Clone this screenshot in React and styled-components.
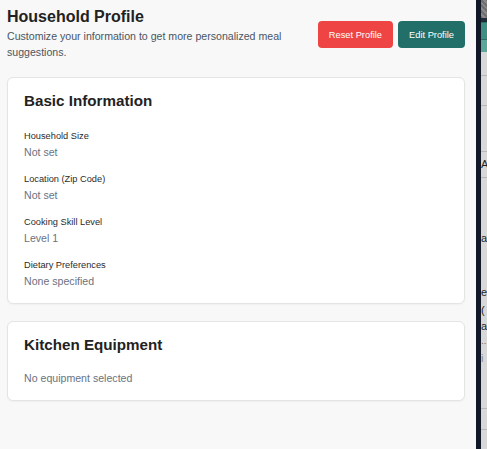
import React from "react";
import styled, { createGlobalStyle } from "styled-components";

const GlobalStyle = createGlobalStyle`
  html, body {
    margin: 0;
    padding: 0;
    background: #f8f8f8;
    font-family: "Liberation Sans", Arial, Helvetica, sans-serif;
  }
  *, *::before, *::after {
    box-sizing: border-box;
  }
`;

const fields = [
  { label: "Household Size", value: "Not set" },
  { label: "Location (Zip Code)", value: "Not set" },
  { label: "Cooking Skill Level", value: "Level 1" },
  { label: "Dietary Preferences", value: "None specified" },
];

// rows of the neighbouring panel that peeks in at the right edge
const peekRows = [
  { h: 24, line: true },
  { h: 30, line: true },
  { h: 46, line: true },
  { h: 26, text: "A", line: true },
  { h: 50 },
  { h: 20, text: "a" },
  { h: 34 },
  { h: 20, text: "e" },
  { h: 16, text: "(" },
  { h: 16, text: "a" },
  { h: 16, text: "…", small: true },
  { h: 16, text: "i", faint: true },
  { h: 43, line: true },
  { h: 21, line: true },
];

export default function App() {
  return (
    <>
      <GlobalStyle />
      <Page>
        <Main>
          <Header>
            <TitleBlock>
              <Title>Household Profile</Title>
              <Subtitle>
                Customize your information to get more personalized meal
                suggestions.
              </Subtitle>
            </TitleBlock>
            <Actions>
              <Button $variant="danger">Reset Profile</Button>
              <Button>Edit Profile</Button>
            </Actions>
          </Header>

          <Card>
            <CardTitle>Basic Information</CardTitle>
            <Fields>
              {fields.map((f) => (
                <Field key={f.label}>
                  <Label>{f.label}</Label>
                  <Value>{f.value}</Value>
                </Field>
              ))}
            </Fields>
          </Card>

          <Card>
            <CardTitle>Kitchen Equipment</CardTitle>
            <Value>No equipment selected</Value>
          </Card>
        </Main>

        <Peek>
          <Thumb />
          <DarkBand />
          <TealBand />
          <TealBand $light />
          {peekRows.map((r, i) => (
            <PeekRow key={i} $h={r.h} $line={r.line}>
              {r.text && (
                <PeekText $small={r.small} $faint={r.faint}>
                  {r.text}
                </PeekText>
              )}
            </PeekRow>
          ))}
        </Peek>
      </Page>
    </>
  );
}

const Page = styled.div`
  display: flex;
  min-height: 100vh;
  width: 100%;
  overflow: hidden;
`;

const Main = styled.main`
  flex: 1;
  min-width: 0;
  display: flex;
  flex-direction: column;
  gap: 17px;
  padding: 7px 11px 0 7px;
`;

const Header = styled.div`
  display: flex;
  align-items: center;
  justify-content: space-between;
`;

const TitleBlock = styled.div`
  flex: 1;
  max-width: 286px;
`;

const Title = styled.h1`
  margin: 0;
  font-size: 16px;
  line-height: 20px;
  font-weight: 700;
  color: #222222;
`;

const Subtitle = styled.p`
  margin: 1px 0 0;
  font-size: 10.6px;
  line-height: 16px;
  color: #4b5563;
`;

const Actions = styled.div`
  display: flex;
  gap: 5px;
  margin-top: 2px;
`;

const Button = styled.button`
  height: 27px;
  padding: 0 11px;
  border: none;
  border-radius: 4px;
  font-family: inherit;
  font-size: 9.3px;
  color: #ffffff;
  background: ${(p) => (p.$variant === "danger" ? "#ef4444" : "#226f69")};
  cursor: pointer;
`;

const Card = styled.section`
  background: #ffffff;
  border: 1px solid #e4e4e4;
  border-radius: 6px;
  box-shadow: 0 1px 2px rgba(0, 0, 0, 0.04);
  padding: 14px 16px;
`;

const CardTitle = styled.h2`
  margin: 0 0 16px;
  font-size: 15.2px;
  line-height: 18px;
  font-weight: 700;
  color: #222222;
`;

const Fields = styled.div`
  display: flex;
  flex-direction: column;
  gap: 12px;
  padding-top: 3px;
`;

const Field = styled.div`
  display: flex;
  flex-direction: column;
  gap: 1px;
`;

const Label = styled.div`
  font-size: 9.25px;
  line-height: 14px;
  color: #2b2b2b;
`;

const Value = styled.div`
  font-size: 10.6px;
  line-height: 16px;
  color: #6b7280;
`;

const Peek = styled.aside`
  width: 11px;
  flex-shrink: 0;
  border-left: 5px solid #111827;
  background: #d8d8d8;
  overflow: hidden;
  display: flex;
  flex-direction: column;
`;

const Thumb = styled.div`
  height: 18px;
  flex-shrink: 0;
  background: repeating-linear-gradient(
    45deg,
    #6f6f6f 0 2px,
    #8a8a8a 2px 4px
  );
`;

const DarkBand = styled.div`
  height: 4px;
  flex-shrink: 0;
  background: #1d2b36;
`;

const TealBand = styled.div`
  height: ${(p) => (p.$light ? "13px" : "17px")};
  flex-shrink: 0;
  background: ${(p) => (p.$light ? "#5ba89a" : "#3e8f82")};
  border-top: 1px solid #2e6f66;
`;

const PeekRow = styled.div`
  height: ${(p) => p.$h}px;
  flex-shrink: 0;
  border-bottom: ${(p) => (p.$line ? "1px solid #b9b9b9" : "none")};
  display: flex;
  align-items: center;
`;

const PeekText = styled.span`
  font-size: ${(p) => (p.$small ? "8px" : "11px")};
  line-height: 1;
  margin-left: 0;
  color: ${(p) => (p.$faint ? "#8a8a8a" : "#1f1f1f")};
`;
